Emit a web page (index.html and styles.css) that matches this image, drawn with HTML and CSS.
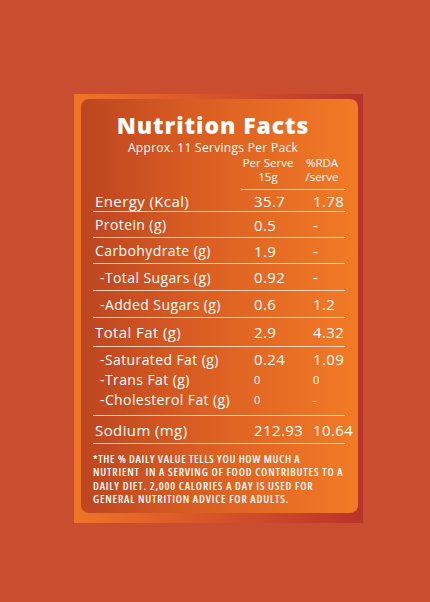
FILE: index.html
```html
<!DOCTYPE html>
<html lang="en">
<head>
    <meta charset="UTF-8">
    <meta name="viewport" content="width=device-width, initial-scale=1.0">
    <title>Nutrition Facts</title>
    <link rel="stylesheet" href="styles.css">
</head>
<body>
    <div class="frame">
        <div class="panel">
            <h1>Nutrition Facts</h1>
            <p class="servings">Approx. 11 Servings Per Pack</p>

            <div class="row head">
                <div class="name"></div>
                <div class="val">Per Serve<br>15g</div>
                <div class="rda">%RDA<br>/serve</div>
            </div>

            <div class="row energy big">
                <div class="name">Energy (Kcal)</div>
                <div class="val">35.7</div>
                <div class="rda">1.78</div>
            </div>
            <div class="row short">
                <div class="name">Protein (g)</div>
                <div class="val">0.5</div>
                <div class="rda">-</div>
            </div>
            <div class="row short">
                <div class="name">Carbohydrate (g)</div>
                <div class="val">1.9</div>
                <div class="rda">-</div>
            </div>
            <div class="row">
                <div class="name sub">-Total Sugars (g)</div>
                <div class="val">0.92</div>
                <div class="rda">-</div>
            </div>
            <div class="row">
                <div class="name sub">-Added Sugars (g)</div>
                <div class="val">0.6</div>
                <div class="rda">1.2</div>
            </div>
            <div class="row big tall">
                <div class="name">Total Fat (g)</div>
                <div class="val">2.9</div>
                <div class="rda">4.32</div>
            </div>

            <div class="group">
                <div class="row plain">
                    <div class="name sub">-Saturated Fat (g)</div>
                    <div class="val">0.24</div>
                    <div class="rda">1.09</div>
                </div>
                <div class="row plain small">
                    <div class="name sub">-Trans Fat (g)</div>
                    <div class="val">0</div>
                    <div class="rda">0</div>
                </div>
                <div class="row plain small">
                    <div class="name sub">-Cholesterol Fat (g)</div>
                    <div class="val">0</div>
                    <div class="rda">-</div>
                </div>
            </div>

            <div class="row big sodium">
                <div class="name">Sodium (mg)</div>
                <div class="val">212.93</div>
                <div class="rda">10.64</div>
            </div>

            <p class="note"><span class="first">*THE % DAILY VALUE TELLS YOU HOW MUCH A</span><br>NUTRIENT&nbsp; IN A SERVING OF FOOD CONTRIBUTES TO A<br>DAILY DIET. 2,000 CALORIES A DAY IS USED FOR<br>GENERAL NUTRITION ADVICE FOR ADULTS.</p>
        </div>
    </div>
</body>
</html>
```

FILE: styles.css
```css
body {
    margin: 0;
    padding: 94px 0 0 74px;
    background-color: #c94d2e;
    font-family: "Open Sans", sans-serif;
    color: #fff;
    height: 602px;
    box-sizing: border-box;
}
.frame {
    width: 289px;
    height: 429px;
    box-sizing: border-box;
    padding: 5px 5px 10px 7px;
    background: linear-gradient(90deg, #ef7528 0%, #d8552a 45%, #b8342b 100%);
}
.panel {
    height: 100%;
    box-sizing: border-box;
    border-radius: 8px;
    padding: 12px 13px 0 12px;
    background: linear-gradient(90deg, #bd4520 0%, #dc5f22 45%, #f27b26 100%);
}
h1 {
    margin: 0;
    text-align: center;
    font-size: 23px;
    line-height: 28px;
    font-weight: 800;
    letter-spacing: 0.9px;
    padding-right: 12px;
}
.servings {
    margin: 0;
    text-align: center;
    font-size: 12px;
    line-height: 17px;
    letter-spacing: 0.3px;
    padding-right: 12px;
}
.row {
    display: flex;
    align-items: center;
    height: 26px;
    border-bottom: 1px solid rgba(255, 236, 215, 0.85);
    font-size: 14px;
    letter-spacing: 0.4px;
}
.row .name {
    width: 148px;
    padding-left: 2px;
    box-sizing: border-box;
    white-space: nowrap;
}
.row .name.sub {
    padding-left: 7px;
}
.row .val {
    width: 58px;
    padding-left: 13px;
    box-sizing: border-box;
    font-size: 15px;
}
.row .rda {
    width: 46px;
    padding-left: 14px;
    box-sizing: border-box;
    font-size: 15px;
    white-space: nowrap;
}
.row.head {
    height: auto;
    border-bottom: none;
    margin-top: 0;
    align-items: stretch;
    letter-spacing: 0;
}
.row.head .val,
.row.head .rda {
    font-size: 11.5px;
    line-height: 14px;
    text-align: center;
    white-space: nowrap;
    padding: 0 0 5px 0;
    border-bottom: 1px solid rgba(255, 236, 215, 0.85);
}
.row.head .val {
    padding-right: 4px;
}
.row.energy {
    height: 21px;
}
.row.short {
    height: 25px;
}
.row.big .name {
    font-size: 15px;
}
.row.tall {
    height: 28px;
}
.row.sodium {
    height: 27px;
}
.group {
    padding: 2px 0 6px;
    border-bottom: 1px solid rgba(255, 236, 215, 0.85);
}
.row.plain {
    border-bottom: none;
    height: 20px;
}
.row.small .val,
.row.small .rda {
    font-size: 11px;
}
.note {
    margin: 8px 0 0 0;
    font-family: "Open Sans", sans-serif;
    font-weight: 600;
    font-stretch: 75%;
    font-size: 11px;
    line-height: 13.3px;
    letter-spacing: 0.8px;
    white-space: nowrap;
}
.note .first {
    letter-spacing: 0.65px;
}
```
